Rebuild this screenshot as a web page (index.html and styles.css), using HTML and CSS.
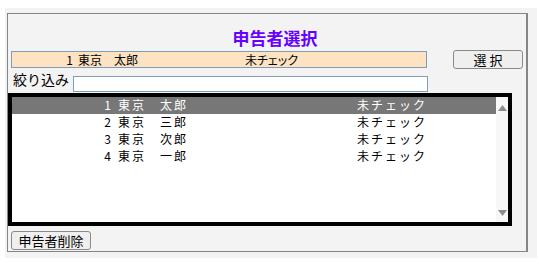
FILE: index.html
```html
<!DOCTYPE html>
<html lang="ja">
<head>
<meta charset="utf-8">
<title>申告者選択</title>
<link rel="stylesheet" href="styles.css">
</head>
<body>
<div class="page">
  <div class="panel">
    <h1 class="title">申告者選択</h1>
    <div class="top-row">
      <div class="current">
        <span class="cur-no">1</span><span class="cur-name">東京　太郎</span><span class="cur-status">未チェック</span>
      </div>
      <button class="btn btn-select">選 択</button>
    </div>
    <div class="filter-row">
      <label class="filter-label" for="filter">絞り込み</label>
      <input class="filter-input" id="filter" type="text">
    </div>
    <div class="listbox">
      <div class="rows">
        <div class="row selected"><span class="no">1</span><span class="name">東京　太郎</span><span class="status">未チェック</span></div>
        <div class="row"><span class="no">2</span><span class="name">東京　三郎</span><span class="status">未チェック</span></div>
        <div class="row"><span class="no">3</span><span class="name">東京　次郎</span><span class="status">未チェック</span></div>
        <div class="row"><span class="no">4</span><span class="name">東京　一郎</span><span class="status">未チェック</span></div>
      </div>
      <div class="scrollbar">
        <svg class="arrow" width="9" height="6" viewBox="0 0 9 6"><polygon points="4.5,0 9,6 0,6" fill="#8c8c8c"/></svg>
        <svg class="arrow" width="9" height="6" viewBox="0 0 9 6"><polygon points="0,0 9,0 4.5,6" fill="#8c8c8c"/></svg>
      </div>
    </div>
    <button class="btn btn-delete">申告者削除</button>
  </div>
</div>
</body>
</html>
```
FILE: styles.css
```css
* { box-sizing: border-box; }
html, body { margin: 0; padding: 0; background: #ffffff; }
body {
  font-family: "Noto Sans CJK JP", "Liberation Sans", sans-serif;
  color: #000;
}
.page {
  margin: 8px 2px 7px 5px;
  height: 250px;
  background: #f3f3f3;
  padding: 5px 9px 6px 2px;
}
.panel {
  height: 239px;
  border: 1px solid #858585;
  border-right-width: 2px;
  display: flex;
  flex-direction: column;
  align-items: flex-start;
}
.title {
  margin: 14px 0 0 0;
  width: 100%;
  padding-left: 16px;
  text-align: center;
  font-size: 17px;
  line-height: 20px;
  font-weight: bold;
  color: #6600ff;
}
.top-row {
  margin-top: 2px;
  margin-left: 3px;
  height: 19px;
  display: flex;
  align-items: flex-start;
}
.current {
  margin-top: 1px;
  width: 416px;
  height: 17px;
  background: #fde3c2;
  border: 1px solid #7f9db9;
  display: flex;
  font-size: 12px;
  line-height: 15px;
  font-feature-settings: "palt";
}
.cur-no { width: 61px; text-align: right; }
.cur-name { margin-left: 5px; width: 167px; font-feature-settings: normal; }
.btn {
  font-family: "Noto Sans CJK JP", "Liberation Sans", sans-serif;
  background: #efefef;
  border: 1px solid #8a8a8a;
  border-radius: 3px;
  padding: 0;
  font-size: 13px;
  line-height: 17px;
  color: #000;
}
.btn-select {
  margin-left: 26px;
  width: 70px;
  height: 19px;
}
.filter-row {
  height: 24px;
  margin-left: 5px;
  display: flex;
  align-items: flex-start;
}
.filter-label {
  margin-top: 1px;
  font-size: 14px;
  line-height: 18px;
}
.filter-input {
  margin-top: 7px;
  margin-left: 4px;
  width: 355px;
  height: 16px;
  border: 1px solid #7f9db9;
  background: #fff;
  padding: 0;
  outline: none;
}
.listbox {
  width: 504px;
  height: 133px;
  border: 4px solid #000;
  background: #fff;
  display: flex;
}
.rows {
  flex: 1;
}
.row {
  height: 17px;
  display: flex;
  align-items: flex-start;
  font-size: 12px;
  line-height: 16px;
  letter-spacing: 2px;
  white-space: nowrap;
}
.row.selected {
  background: #777777;
  color: #fff;
}
.no { width: 99px; text-align: right; letter-spacing: 0; }
.name { margin-left: 7px; width: 239px; }
.scrollbar {
  width: 12px;
  background: #f7f7f7;
  display: flex;
  flex-direction: column;
  justify-content: space-between;
  align-items: center;
  padding: 8px 0 6px 1px;
}
.arrow { display: block; }
.btn-delete {
  margin-top: 5px;
  margin-left: 3px;
  width: 80px;
  height: 19px;
}
```
